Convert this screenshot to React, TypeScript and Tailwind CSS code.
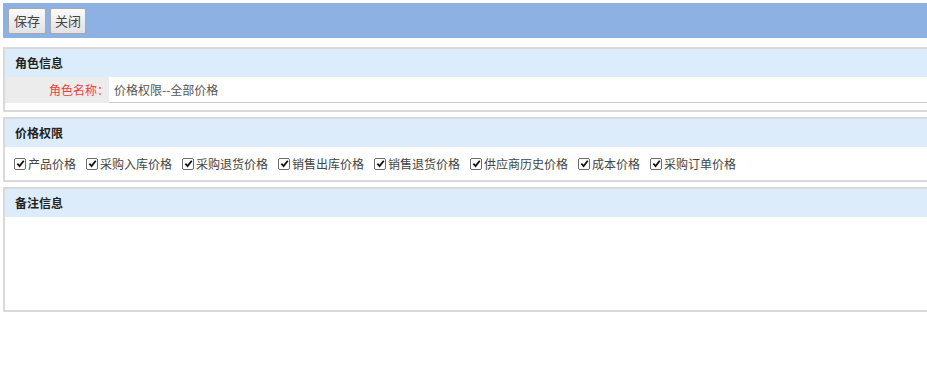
const priceItems = [
  "产品价格",
  "采购入库价格",
  "采购退货价格",
  "销售出库价格",
  "销售退货价格",
  "供应商历史价格",
  "成本价格",
  "采购订单价格",
];

function CheckBox() {
  return (
    <span className="inline-flex w-[12px] h-[12px] items-center justify-center rounded-[2px] border border-[#6b6b6b] bg-white">
      <svg width="9" height="9" viewBox="0 0 10 10">
        <path d="M1.5 5.2 L4 7.8 L8.6 2" fill="none" stroke="#111" strokeWidth="2" />
      </svg>
    </span>
  );
}

function Panel({ title, children }: { title: string; children: React.ReactNode }) {
  return (
    <div className="border-2 border-[#d9d9d9] bg-white">
      <div className="h-[28px] bg-[#ddecfa] flex items-center pl-[10px] font-bold text-[12px] text-[#222]">
        {title}
      </div>
      {children}
    </div>
  );
}

export default function App() {
  return (
    <div className="w-[927px] h-[374px] overflow-hidden bg-white font-['Noto_Sans_CJK_SC',sans-serif] text-[12px] text-[#444]">
      <div className="ml-[3px] mt-[3px] h-[35px] bg-[#8db1e3] flex items-center gap-[4px] pl-[5px]">
        <button className="w-[38px] h-[26px] border border-[#a9a9a9] bg-gradient-to-b from-[#fafafa] to-[#e2e2e2] text-[13px] text-[#444] rounded-[2px]">
          保存
        </button>
        <button className="w-[36px] h-[26px] border border-[#a9a9a9] bg-gradient-to-b from-[#fafafa] to-[#e2e2e2] text-[13px] text-[#444] rounded-[2px]">
          关闭
        </button>
      </div>

      <div className="ml-[3px] mt-[9px] w-[940px] flex flex-col gap-[5px]">
        <Panel title="角色信息">
          <div className="pb-[7px]">
            <div className="flex h-[26px]">
              <div className="w-[104px] bg-[#ececec] flex items-center justify-end pr-[0px] text-[#f03c3c]">
                角色名称：
              </div>
              <div className="flex-1 flex items-center pl-[5px] border-b border-[#c8c8c8] text-[#555]">
                价格权限--全部价格
              </div>
            </div>
          </div>
        </Panel>

        <Panel title="价格权限">
          <div className="h-[33px] flex items-center pl-[9px]">
            {priceItems.map((item) => (
              <label key={item} className="flex items-center mr-[10px]">
                <CheckBox />
                <span className="ml-[2px]">{item}</span>
              </label>
            ))}
          </div>
        </Panel>

        <Panel title="备注信息">
          <div className="h-[93px]" />
        </Panel>
      </div>
    </div>
  );
}
